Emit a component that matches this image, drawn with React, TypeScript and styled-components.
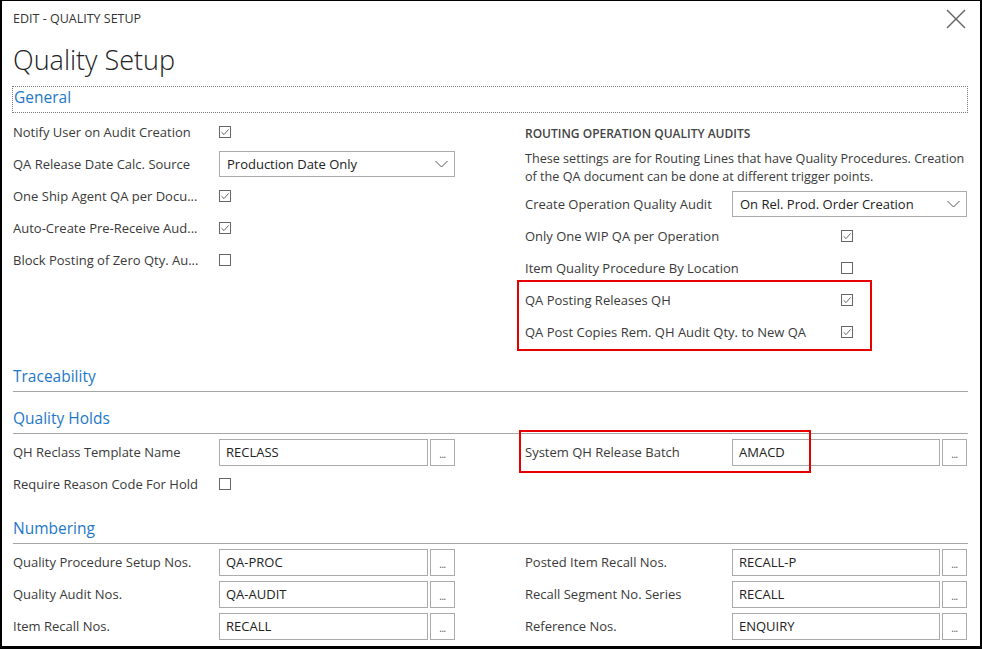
import React from 'react';
import styled, { createGlobalStyle } from 'styled-components';

const GlobalStyle = createGlobalStyle`
  html, body {
    margin: 0;
    padding: 0;
    background: #ffffff;
  }
`;

const FONT = `"Open Sans", "Noto Sans", "Liberation Sans", sans-serif`;
const BLUE = '#1e78c8';

const Dialog = styled.div`
  width: 982px;
  height: 649px;
  box-sizing: border-box;
  border: solid #000;
  border-width: 1px 2px 3px 2px;
  padding: 0 12px 0 11px;
  background: #fff;
  overflow: hidden;
  font-family: ${FONT};
  color: #3a3a3a;
`;

const TopBar = styled.div`
  height: 34px;
  display: flex;
  align-items: center;
  justify-content: space-between;
`;

const Caption = styled.span`
  font-size: 12.5px;
  color: #333;
  text-transform: uppercase;
`;

const CloseButton = styled.button`
  border: 0;
  background: none;
  padding: 0;
  margin: 2px 2px 0 0;
  width: 20px;
  height: 20px;
  display: flex;
`;

const Title = styled.h1`
  margin: 7px 0 8px;
  font-size: 27px;
  font-weight: 300;
  line-height: 36px;
  color: #222;
`;

const GeneralHeader = styled.div`
  height: 27px;
  box-sizing: border-box;
  margin-left: -1px;
  border: 1px dotted #777;
  padding-left: 1px;
  font-size: 15.5px;
  line-height: 21px;
  color: ${BLUE};
`;

const SectionTitle = styled.div`
  padding: 16px 0 4px;
  line-height: 21px;
  font-size: 15.5px;
  color: ${BLUE};
  border-bottom: 1px solid #a6a6a6;
`;

const Columns = styled.div<{ $top: number }>`
  display: grid;
  grid-template-columns: 442px 442px;
  column-gap: 70px;
  margin: ${(p) => p.$top}px 0 2px;
  align-items: start;
`;

const Column = styled.div`
  display: flex;
  flex-direction: column;
`;

const Row = styled.div<{ $labelWidth: number }>`
  display: grid;
  grid-template-columns: ${(p) => p.$labelWidth}px 1fr;
  align-items: center;
  height: 32px;
`;

const Label = styled.span`
  font-size: 13px;
  white-space: nowrap;
  overflow: hidden;
  color: #3a3a3a;
`;

const GroupHeading = styled.div`
  height: 34px;
  display: flex;
  align-items: center;
  font-size: 12px;
  font-weight: 600;
  color: #444;
  text-transform: uppercase;
`;

const Description = styled.p`
  margin: 0;
  padding-bottom: 2px;
  font-size: 12.6px;
  line-height: 18px;
  color: #3a3a3a;
`;

const Box = styled.span`
  width: 12px;
  height: 12px;
  box-sizing: border-box;
  border: 1px solid #666;
  display: flex;
  align-items: center;
  justify-content: center;
  background: #fff;
`;

const Select = styled.div`
  height: 26px;
  box-sizing: border-box;
  border: 1px solid #ababab;
  display: flex;
  align-items: center;
  justify-content: space-between;
  padding: 0 6px 0 7px;
  font-size: 13px;
  color: #222;
`;

const Lookup = styled.div`
  display: flex;
  gap: 2px;
`;

const TextBox = styled.div`
  flex: 1;
  height: 27px;
  box-sizing: border-box;
  border: 1px solid #ababab;
  display: flex;
  align-items: center;
  padding-left: 6px;
  font-size: 13px;
  color: #222;
`;

const LookupButton = styled.div`
  width: 25px;
  height: 27px;
  box-sizing: border-box;
  border: 1px solid #ababab;
  display: flex;
  align-items: center;
  justify-content: center;
  padding-top: 3px;
  font-size: 10px;
  color: #555;
  letter-spacing: -0.5px;
`;

const Highlight = styled.div`
  position: relative;
`;

const RedFrame = styled.div<{ $left: number; $top: number; $w: number; $h: number }>`
  position: absolute;
  left: ${(p) => p.$left}px;
  top: ${(p) => p.$top}px;
  width: ${(p) => p.$w}px;
  height: ${(p) => p.$h}px;
  box-sizing: border-box;
  border: 2px solid #e60000;
  pointer-events: none;
`;

const CheckBox: React.FC<{ checked?: boolean }> = ({ checked }) => (
  <Box>
    {checked && (
      <svg width="10" height="10" viewBox="0 0 10 10">
        <polyline points="1.5,5.2 4,7.6 8.6,2.4" fill="none" stroke="#666" strokeWidth="1" />
      </svg>
    )}
  </Box>
);

const Dropdown: React.FC<{ value: string }> = ({ value }) => (
  <Select>
    <span>{value}</span>
    <svg width="13" height="8" viewBox="0 0 13 8">
      <polyline points="0.5,1 6.5,7 12.5,1" fill="none" stroke="#555" strokeWidth="1" />
    </svg>
  </Select>
);

const LookupField: React.FC<{ value: string }> = ({ value }) => (
  <Lookup>
    <TextBox>{value}</TextBox>
    <LookupButton>...</LookupButton>
  </Lookup>
);

const Field: React.FC<{ label: string; labelWidth?: number; children?: React.ReactNode }> = ({
  label,
  labelWidth = 206,
  children,
}) => (
  <Row $labelWidth={labelWidth}>
    <Label>{label}</Label>
    <div>{children}</div>
  </Row>
);

const App: React.FC = () => {
  return (
    <>
      <GlobalStyle />
      <Dialog>
        <TopBar>
          <Caption>Edit - Quality Setup</Caption>
          <CloseButton aria-label="Close">
            <svg width="20" height="20" viewBox="0 0 20 20">
              <line x1="1" y1="1" x2="19" y2="19" stroke="#666" strokeWidth="1.4" />
              <line x1="19" y1="1" x2="1" y2="19" stroke="#666" strokeWidth="1.4" />
            </svg>
          </CloseButton>
        </TopBar>
        <Title>Quality Setup</Title>

        <GeneralHeader>General</GeneralHeader>
        <Columns $top={3}>
          <Column>
            <Field label="Notify User on Audit Creation">
              <CheckBox checked />
            </Field>
            <Field label="QA Release Date Calc. Source">
              <Dropdown value="Production Date Only" />
            </Field>
            <Field label="One Ship Agent QA per Docu...">
              <CheckBox checked />
            </Field>
            <Field label="Auto-Create Pre-Receive Aud...">
              <CheckBox checked />
            </Field>
            <Field label="Block Posting of Zero Qty. Au...">
              <CheckBox />
            </Field>
          </Column>
          <Column>
            <GroupHeading>Routing Operation Quality Audits</GroupHeading>
            <Description>
              These settings are for Routing Lines that have Quality Procedures. Creation of the QA
              document can be done at different trigger points.
            </Description>
            <Field label="Create Operation Quality Audit" labelWidth={207}>
              <Dropdown value="On Rel. Prod. Order Creation" />
            </Field>
            <Field label="Only One WIP QA per Operation" labelWidth={316}>
              <CheckBox checked />
            </Field>
            <Field label="Item Quality Procedure By Location" labelWidth={316}>
              <CheckBox />
            </Field>
            <Highlight>
              <Field label="QA Posting Releases QH" labelWidth={316}>
                <CheckBox checked />
              </Field>
              <Field label="QA Post Copies Rem. QH Audit Qty. to New QA" labelWidth={316}>
                <CheckBox checked />
              </Field>
              <RedFrame $left={-8} $top={-4} $w={355} $h={71} />
            </Highlight>
          </Column>
        </Columns>

        <SectionTitle>Traceability</SectionTitle>

        <SectionTitle>Quality Holds</SectionTitle>
        <Columns $top={2}>
          <Column>
            <Field label="QH Reclass Template Name">
              <LookupField value="RECLASS" />
            </Field>
            <Field label="Require Reason Code For Hold">
              <CheckBox />
            </Field>
          </Column>
          <Column>
            <Highlight>
              <Field label="System QH Release Batch" labelWidth={207}>
                <LookupField value="AMACD" />
              </Field>
              <RedFrame $left={-6} $top={-6} $w={292} $h={43} />
            </Highlight>
          </Column>
        </Columns>

        <SectionTitle>Numbering</SectionTitle>
        <Columns $top={2}>
          <Column>
            <Field label="Quality Procedure Setup Nos.">
              <LookupField value="QA-PROC" />
            </Field>
            <Field label="Quality Audit Nos.">
              <LookupField value="QA-AUDIT" />
            </Field>
            <Field label="Item Recall Nos.">
              <LookupField value="RECALL" />
            </Field>
          </Column>
          <Column>
            <Field label="Posted Item Recall Nos." labelWidth={207}>
              <LookupField value="RECALL-P" />
            </Field>
            <Field label="Recall Segment No. Series" labelWidth={207}>
              <LookupField value="RECALL" />
            </Field>
            <Field label="Reference Nos." labelWidth={207}>
              <LookupField value="ENQUIRY" />
            </Field>
          </Column>
        </Columns>
      </Dialog>
    </>
  );
};

export default App;
